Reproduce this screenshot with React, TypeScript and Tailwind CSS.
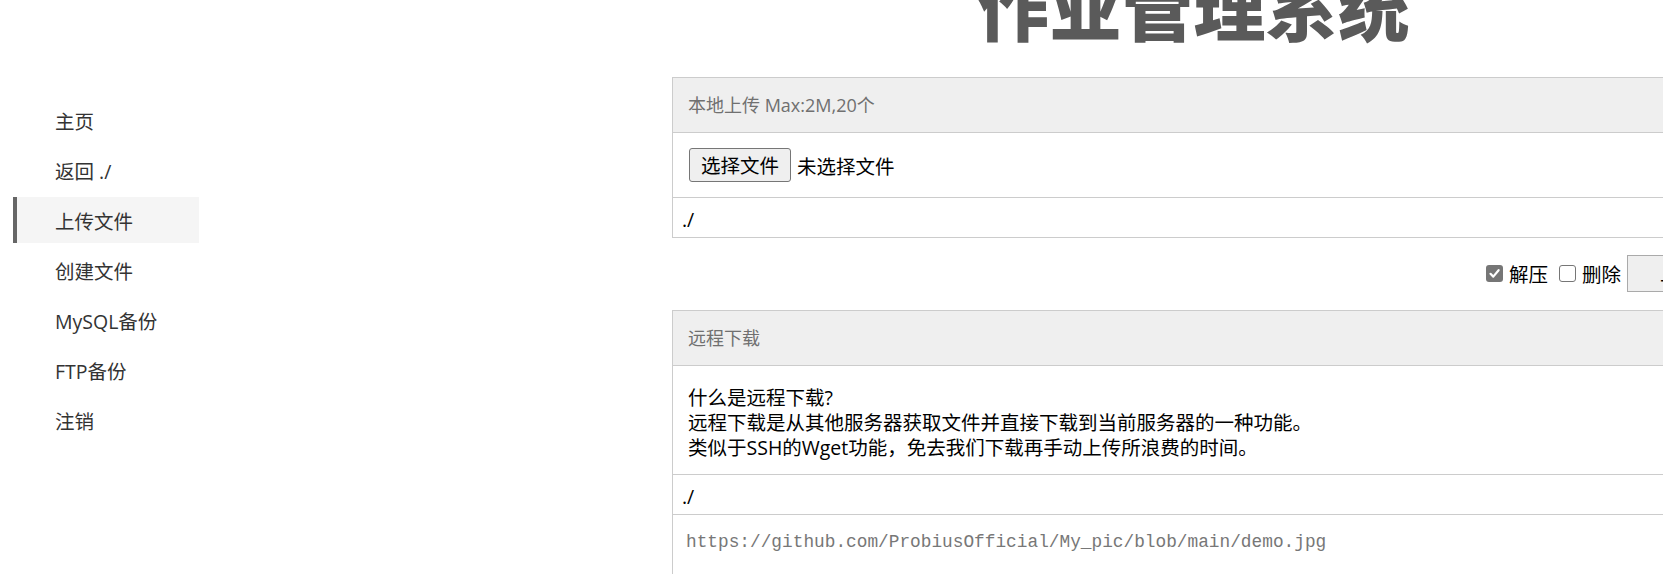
const NAV = ["主页", "返回 ./", "上传文件", "创建文件", "MySQL备份", "FTP备份", "注销"];

function Checkbox({ checked }: { checked: boolean }) {
  if (checked) {
    return (
      <span className="block shrink-0 w-[17px] h-[17px] rounded-[3px] bg-[#767676] flex items-center justify-center">
        <svg width="13" height="13" viewBox="0 0 13 13" fill="none">
          <path d="M2.5 6.8 L5.3 9.6 L10.6 3.2" stroke="white" strokeWidth="2.2" strokeLinecap="round" strokeLinejoin="round" />
        </svg>
      </span>
    );
  }
  return <span className="block shrink-0 w-[17px] h-[17px] rounded-[3px] border-[1.5px] border-[#767676] bg-white" />;
}

export default function App() {
  return (
    <div className="w-full h-[574px] overflow-hidden bg-white font-['Open_Sans','Noto_Sans_CJK_SC',sans-serif]">
      <div className="flex w-[1760px]">
        {/* sidebar */}
        <aside className="w-[672px] shrink-0 pt-[97px] pl-[13px]">
          <nav className="w-[186px] flex flex-col gap-[4px]">
            {NAV.map((item) =>
              item === "上传文件" ? (
                <a key={item} className="h-[46px] pt-[3px] flex items-center border-l-4 border-[#666] bg-[#f5f5f5] pl-[38px] text-[19.5px] text-[#333]">
                  {item}
                </a>
              ) : (
                <a key={item} className="h-[46px] pt-[3px] flex items-center pl-[42px] text-[19.5px] text-[#333]">
                  {item}
                </a>
              )
            )}
          </nav>
        </aside>

        {/* main */}
        <main className="w-[1060px] shrink-0">
          <h1 className="-mt-[29px] w-[1043px] text-center text-[72px] leading-none font-black text-[#5a5a5a]">作业管理系统</h1>

          {/* local upload */}
          <section className="mt-[34px] border border-[#ccc]">
            <div className="h-[55px] flex items-center pl-[15px] bg-[#efefef] border-b border-[#ccc] text-[18px] text-[#707070]">
              本地上传 Max:2M,20个
            </div>
            <div className="h-[65px] flex items-center pl-[16px] border-b border-[#ccc] text-[19.5px] text-black">
              <button className="h-[34px] px-[11px] pt-[2px] rounded-[3px] border border-[#767676] bg-[#efefef] text-[19.5px] leading-none">选择文件</button>
              <span className="ml-[6px] pt-[3px]">未选择文件</span>
            </div>
            <div className="h-[39px] pt-[4px] flex items-center pl-[9px] text-[19.5px] text-black">./</div>
          </section>

          <div className="mt-[17px] mb-[18px] flex items-center justify-end gap-[6px] text-[19.5px] text-black">
            <Checkbox checked />
            <span className="pt-[2px]">解压</span>
            <span className="ml-[5px]">
              <Checkbox checked={false} />
            </span>
            <span className="pt-[2px]">删除</span>
            <button className="h-[37px] px-[32px] border border-[#aaa] bg-[#efefef] text-[19.5px]">上传</button>
          </div>

          {/* remote download */}
          <section className="border border-[#ccc]">
            <div className="h-[55px] flex items-center pl-[15px] bg-[#efefef] border-b border-[#ccc] text-[18px] text-[#707070]">
              远程下载
            </div>
            <div className="pt-[19px] pb-[14px] pl-[15px] border-b border-[#ccc] text-[19.5px] leading-[25px] text-black">
              <p>什么是远程下载?</p>
              <p>远程下载是从其他服务器获取文件并直接下载到当前服务器的一种功能。</p>
              <p>类似于SSH的Wget功能，免去我们下载再手动上传所浪费的时间。</p>
            </div>
            <div className="h-[40px] pt-[4px] flex items-center pl-[9px] border-b border-[#ccc] text-[19.5px] text-black">./</div>
            <div className="h-[80px] pt-[13px] px-[13px]">
              <input
                className="w-full h-[28px] outline-none font-['Liberation_Mono',monospace] text-[17.8px] placeholder:text-[#777]"
                placeholder="https://github.com/ProbiusOfficial/My_pic/blob/main/demo.jpg"
              />
            </div>
          </section>
        </main>
      </div>
    </div>
  );
}
